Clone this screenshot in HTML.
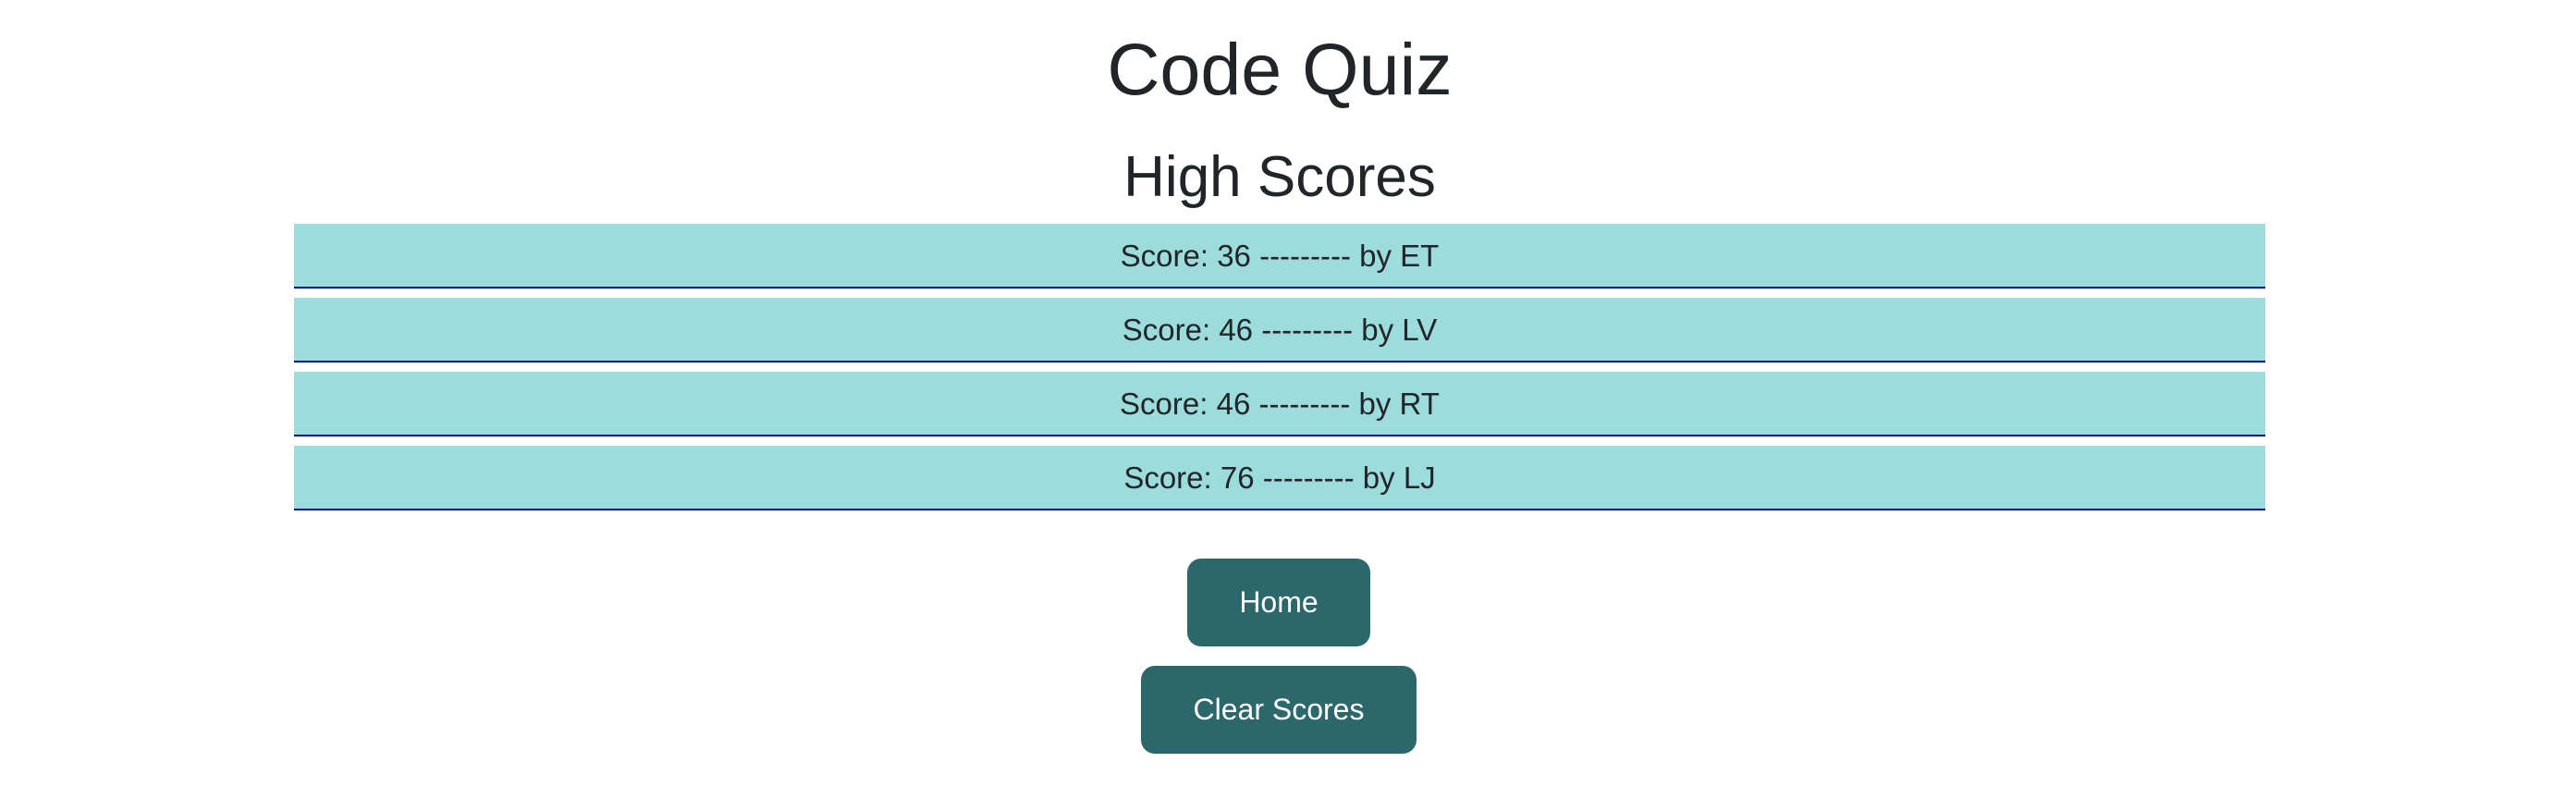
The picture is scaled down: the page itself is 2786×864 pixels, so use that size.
<!DOCTYPE html>
<html><head><meta charset="utf-8"><style>
body{margin:0;width:2786px;height:864px;background:#fff;font-family:"Liberation Sans",sans-serif;color:#212529;position:relative;overflow:hidden}
.t{position:absolute;left:0;width:2768px;text-align:center;white-space:nowrap}
.bar{position:absolute;left:318px;width:2132px;height:68px;background:#9cdcdc;border-bottom:2px solid #000c80;text-align:center;font-size:33px;line-height:70px}
.btn{position:absolute;height:95px;background:#2b676b;color:#fff;border-radius:15px;text-align:center;line-height:95px;font-size:32px}
</style></head><body>
<div class="t" style="top:30px;font-size:79px;line-height:90px">Code Quiz</div>
<div class="t" style="top:157px;font-size:62px;line-height:70px">High Scores</div>
<div class="bar" style="top:242px">Score: 36 --------- by ET</div>
<div class="bar" style="top:322px">Score: 46 --------- by LV</div>
<div class="bar" style="top:402px">Score: 46 --------- by RT</div>
<div class="bar" style="top:482px">Score: 76 --------- by LJ</div>
<div class="btn" style="left:1284px;top:604px;width:198px">Home</div>
<div class="btn" style="left:1234px;top:720px;width:298px">Clear Scores</div>
</body></html>
